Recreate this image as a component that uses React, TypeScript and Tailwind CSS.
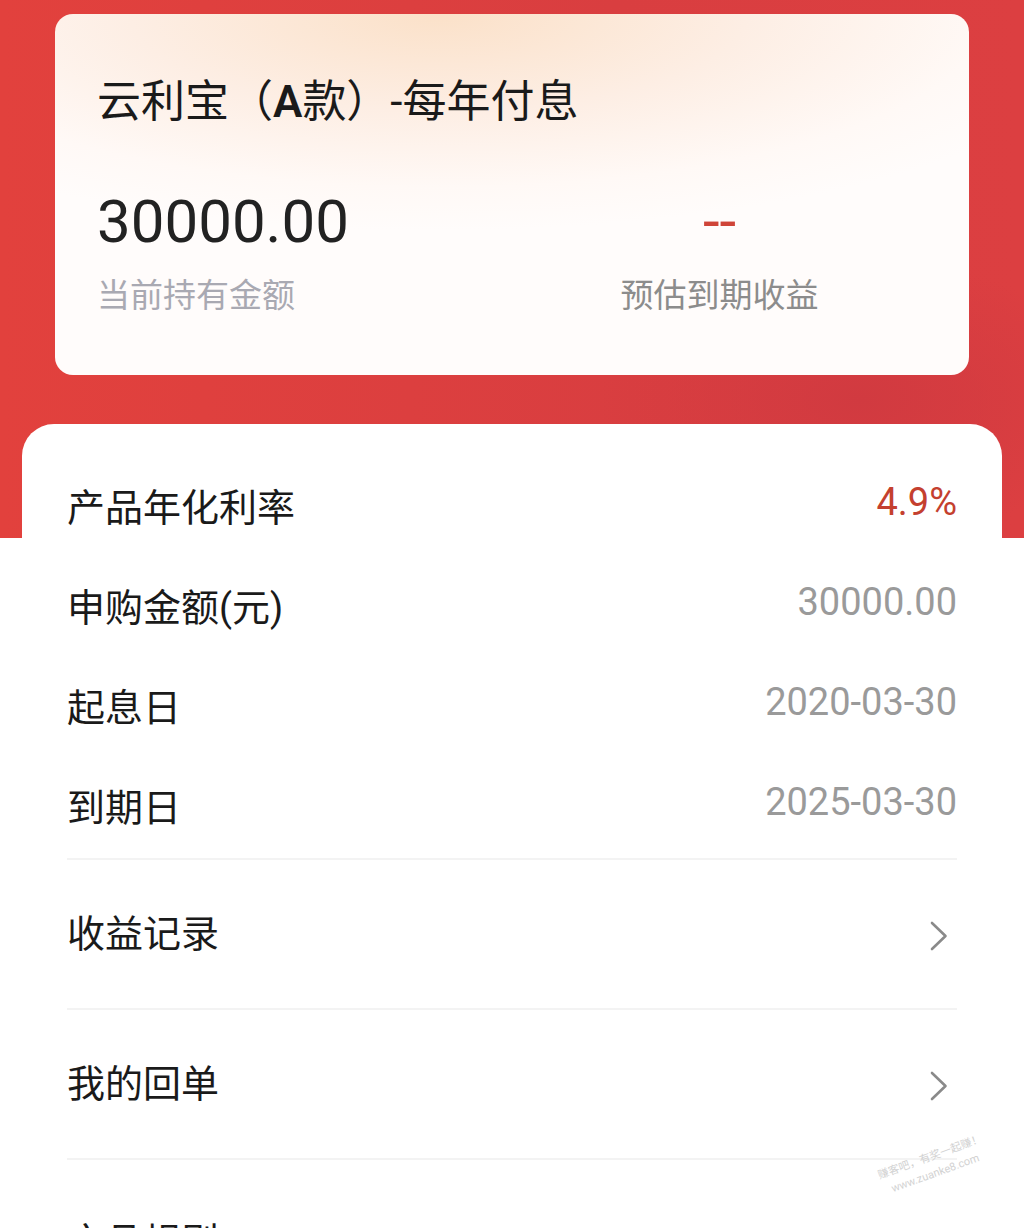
import React from "react";

const FONT = 'Roboto, "Noto Sans CJK SC", sans-serif';

function Chevron() {
  return (
    <svg width="18" height="30" viewBox="0 0 18 30" fill="none">
      <path d="M2 2 L15.5 15 L2 28" stroke="#8a8a8a" strokeWidth="2.6" strokeLinecap="round" strokeLinejoin="round" />
    </svg>
  );
}

function InfoRow({ label, value, valueClass }: { label: string; value: string; valueClass: string }) {
  return (
    <div className="flex h-[100px] items-center justify-between">
      <span className="text-[38px] leading-[48px] text-[#1a1a1a]">{label}</span>
      <span className={`text-[38px] leading-[48px] ${valueClass} -translate-y-[6px]`}>{value}</span>
    </div>
  );
}

function LinkRow({ label }: { label: string }) {
  return (
    <div className="flex h-[150px] items-center justify-between border-t-2 border-[#f3f3f3]">
      <span className="text-[38px] leading-[48px] text-[#1a1a1a]">{label}</span>
      <div className="mr-[9px] mt-[4px]">
        <Chevron />
      </div>
    </div>
  );
}

export default function App() {
  return (
    <div
      className="relative h-[1228px] w-[1024px] overflow-hidden bg-[linear-gradient(to_bottom,transparent_538px,#ffffff_538px),radial-gradient(ellipse_260px_140px_at_860px_400px,#d13a40_0%,rgba(209,58,64,0)_100%),linear-gradient(to_right,#e2413d_0%,#d93e40_60%,#dc3f41_100%)]"
      style={{ fontFamily: FONT }}
    >
      <div className="px-[55px] pt-[14px]">
        <div className="rounded-[18px] bg-[radial-gradient(ellipse_75%_60%_at_42%_0%,#fbe1c9_0%,#fdeee4_45%,#fff9f6_80%,#fffcfb_100%)] px-[42px] pb-[59px] pt-[60px]">
          <div className="text-[44px] leading-[56px] text-[#1a1a1a]">
            云利宝（<span className="font-semibold">A</span>款）-每年付息
          </div>
          <div className="mt-[57px] grid grid-cols-2">
            <div className="flex flex-col">
              <span className="text-[60px] leading-[70px] text-[#222222]">30000.00</span>
              <span className="mt-[19px] text-[33px] leading-[40px] text-[#a9a9b2]">当前持有金额</span>
            </div>
            <div className="flex flex-col items-center">
              <span className="text-[60px] leading-[70px] text-[#cf4438]">--</span>
              <span className="mt-[19px] text-[33px] leading-[40px] text-[#8c8c8c]">预估到期收益</span>
            </div>
          </div>
        </div>
      </div>

      <div className="mx-[22px] mt-[49px] rounded-t-[32px] bg-white px-[45px] pt-[34px]">
        <InfoRow label="产品年化利率" value="4.9%" valueClass="text-[#c4402f]" />
        <InfoRow label="申购金额(元)" value="30000.00" valueClass="text-[#9a9a9a]" />
        <InfoRow label="起息日" value="2020-03-30" valueClass="text-[#9a9a9a]" />
        <InfoRow label="到期日" value="2025-03-30" valueClass="text-[#9a9a9a]" />
        <LinkRow label="收益记录" />
        <LinkRow label="我的回单" />
        <div className="flex h-[150px] items-center justify-between border-t-2 border-[#f3f3f3]">
          <span className="mt-[16px] text-[38px] leading-[48px] text-[#1a1a1a]">产品规则</span>
        </div>
      </div>

      <div className="absolute left-[878px] top-[1148px] -rotate-[20deg] text-[11px] leading-[17px] text-[#d2d2d2]">
        <div>赚客吧，有奖一起赚！</div>
        <div className="ml-[8px]">www.zuanke8.com</div>
      </div>
    </div>
  );
}
